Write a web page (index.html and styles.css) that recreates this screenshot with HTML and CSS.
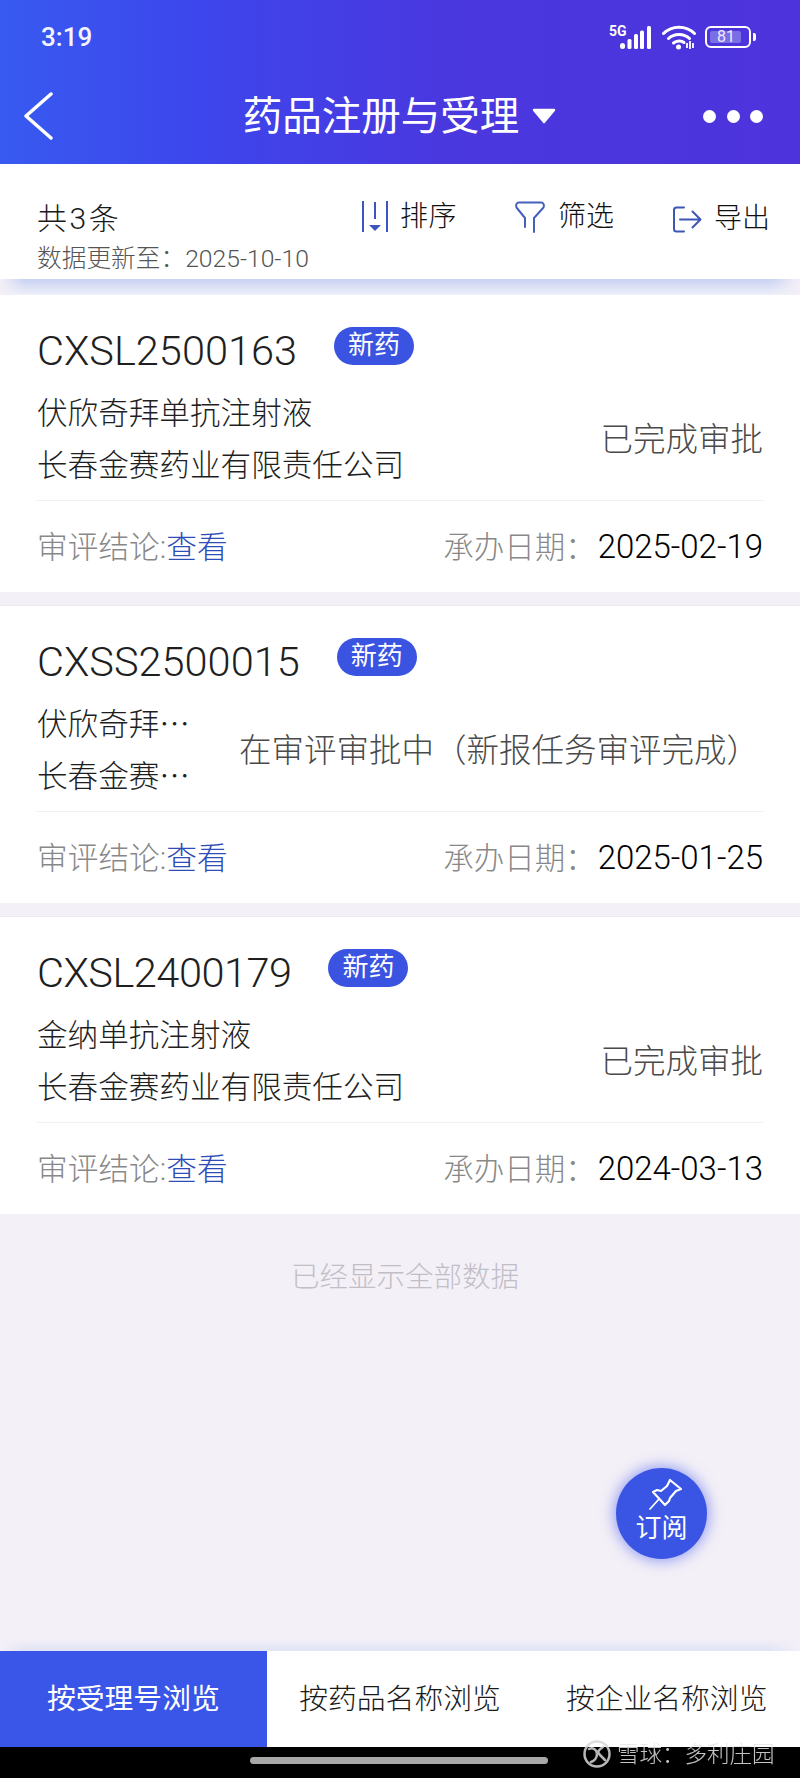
FILE: index.html
```html
<!DOCTYPE html>
<html lang="zh-CN">
<head>
<meta charset="utf-8">
<title>药品注册与受理</title>
<link rel="stylesheet" href="styles.css">
</head>
<body>
<div class="page">
  <header class="header">
    <div class="status">
      <span class="clock">3:19</span>
      <div class="status-icons">
        <svg class="sig" width="44" height="26" viewBox="0 0 44 26">
          <text class="sig-text" x="0" y="12">5G</text>
          <g fill="#fff">
            <rect x="11" y="19" width="5" height="6" rx="2.5"/>
            <rect x="18.500" y="15" width="4" height="10" rx="1.500"/>
            <rect x="25" y="10" width="4" height="15" rx="1.500"/>
            <rect x="31" y="6.500" width="4" height="18.500" rx="1.500"/>
            <rect x="38" y="2" width="4" height="23" rx="1.500"/>
          </g>
        </svg>
        <svg class="wifi" width="34" height="26" viewBox="0 0 34 26">
          <g fill="none" stroke="#fff" stroke-width="3" stroke-linecap="round">
            <path d="M1.500 9.500C10 1 24 1 32.500 9.500"/>
            <path d="M6.500 14.500C12 9 22 9 27.500 14.500"/>
            <path d="M11.500 19C14.500 16.500 19.500 16.500 22 18.500"/>
          </g>
          <circle cx="16.500" cy="23" r="2.500" fill="#fff"/>
          <path d="M25 19v5M28 17v8M31 19v5" stroke="#fff" stroke-width="1.800" fill="none"/>
        </svg>
        <div class="battery">
          <div class="battery-body"><span class="battery-fill"></span><span class="battery-num">81</span></div>
          <span class="battery-nub"></span>
        </div>
      </div>
    </div>
    <nav class="nav">
      <svg class="back" width="30" height="50" viewBox="0 0 30 50">
        <path d="M28 3 3 25 28 47" fill="none" stroke="#fff" stroke-width="3.500" stroke-linecap="round" stroke-linejoin="round"/>
      </svg>
      <div class="title-wrap">
        <h1 class="title">药品注册与受理</h1>
        <svg class="caret" width="26" height="16" viewBox="0 0 26 16"><path d="M3 2h20L13 14Z" fill="#fff" stroke="#fff" stroke-width="2.500" stroke-linejoin="round"/></svg>
      </div>
      <div class="dots"><i class="dot"></i><i class="dot"></i><i class="dot"></i></div>
    </nav>
  </header>

  <section class="toolbar">
    <div class="summary">
      <div class="count">共3条</div>
      <div class="updated">数据更新至：2025-10-10</div>
    </div>
    <div class="actions">
      <div class="action action-sort">
        <svg width="26" height="32" viewBox="0 0 26 32">
          <g stroke="#3d53c0" stroke-width="2" fill="none">
            <path d="M1 0v31M25 0v31M13 1v17"/>
          </g>
          <path d="M7 24h12l-6 6Z" fill="#3d53c0"/>
        </svg>
        <span>排序</span>
      </div>
      <div class="action action-filter">
        <svg width="30" height="32" viewBox="0 0 30 32">
          <path d="M10 26V17L1.500 6.500C.5 4 1.500 1.500 4 1.500h22c2.500 0 3.500 2.500 2.500 5L19 17v14" fill="none" stroke="#4460bd" stroke-width="2" stroke-linecap="round" stroke-linejoin="round"/>
        </svg>
        <span>筛选</span>
      </div>
      <div class="action action-export">
        <svg width="29" height="27" viewBox="0 0 29 27">
          <path d="M11 1.500H3.500C2 1.500 1 2.500 1 4v19c0 1.500 1 2.500 2.500 2.500H11" fill="none" stroke="#3d55b5" stroke-width="2" stroke-linecap="round"/>
          <path d="M7 13.500h20M19.500 5.500l8 8-8 8" fill="none" stroke="#3d55b5" stroke-width="2" stroke-linecap="round" stroke-linejoin="round"/>
        </svg>
        <span>导出</span>
      </div>
    </div>
  </section>
  <div class="band band-top"></div>

  <main class="list">
    <article class="card">
      <div class="card-head"><span class="code">CXSL2500163</span><span class="badge">新药</span></div>
      <div class="card-body">
        <div class="names"><div class="line">伏欣奇拜单抗注射液</div><div class="line">长春金赛药业有限责任公司</div></div>
        <div class="state">已完成审批</div>
      </div>
      <div class="card-foot">
        <div class="review">审评结论:<a class="link">查看</a></div>
        <div class="date-wrap"><span class="date-label">承办日期：</span><span class="date">2025-02-19</span></div>
      </div>
    </article>
    <article class="card">
      <div class="card-head"><span class="code">CXSS2500015</span><span class="badge">新药</span></div>
      <div class="card-body">
        <div class="names"><div class="line">伏欣奇拜…</div><div class="line">长春金赛…</div></div>
        <div class="state state-long">在审评审批中（新报任务审评完成）</div>
      </div>
      <div class="card-foot">
        <div class="review">审评结论:<a class="link">查看</a></div>
        <div class="date-wrap"><span class="date-label">承办日期：</span><span class="date">2025-01-25</span></div>
      </div>
    </article>
    <article class="card">
      <div class="card-head"><span class="code code-tight">CXSL2400179</span><span class="badge">新药</span></div>
      <div class="card-body">
        <div class="names"><div class="line">金纳单抗注射液</div><div class="line">长春金赛药业有限责任公司</div></div>
        <div class="state">已完成审批</div>
      </div>
      <div class="card-foot">
        <div class="review">审评结论:<a class="link">查看</a></div>
        <div class="date-wrap"><span class="date-label">承办日期：</span><span class="date">2024-03-13</span></div>
      </div>
    </article>
    <p class="end-note">已经显示全部数据</p>
    <div class="fab">
      <svg width="36" height="34" viewBox="0 0 36 34">
        <path d="M22 2 33 11 28 13 22 20 21 23 17 27 5 14 9 12 13 13 19 8Z" fill="none" stroke="#fff" stroke-width="2.200" stroke-linejoin="round"/>
        <path d="M11 21 2 31" stroke="#fff" stroke-width="1.800" stroke-linecap="round"/>
      </svg>
      <span class="fab-text">订阅</span>
    </div>
  </main>

  <div class="band band-bottom"></div>
  <div class="tabs">
    <div class="tab tab-active">按受理号浏览</div>
    <div class="tab">按药品名称浏览</div>
    <div class="tab">按企业名称浏览</div>
  </div>
  <footer class="gesture">
    <span class="home-bar"></span>
    <div class="watermark">
      <svg width="30" height="28" viewBox="0 0 30 28">
        <circle cx="15" cy="14" r="12.500" fill="none" stroke="#d8d8d8" stroke-width="2.500"/>
        <path d="M7 9c4-2 8 1 8 5s-3 7-6 8M21 7c-5 3-6 5-3 8l5 5" fill="none" stroke="#d8d8d8" stroke-width="2.500" stroke-linecap="round"/>
      </svg>
      <span class="wm-text">雪球：多利庄园</span>
    </div>
  </footer>
</div>
</body>
</html>
```
FILE: styles.css
```css
* { box-sizing: border-box; }
html, body { margin: 0; padding: 0; }
body {
  font-family: Roboto, "Noto Sans CJK SC", sans-serif;
  color: #222;
  background: #f4f0f7;
}
.page {
  width: 800px;
  height: 1778px;
  display: flex;
  flex-direction: column;
  overflow: hidden;
}

/* header */
.header {
  height: 164px;
  flex: none;
  background: linear-gradient(90deg, #385af0 0%, #3d46ec 25%, #4a38df 55%, #4d33dc 100%);
  color: #fff;
}
.status {
  height: 68px;
  padding: 22px 44px 0 41px;
  display: flex;
  justify-content: space-between;
  align-items: flex-start;
}
.clock { font-size: 26px; line-height: 30px; font-weight: 500; color: #f4f4ff; }
.status-icons { display: flex; align-items: center; gap: 9px; margin-top: 2px; }
.sig-text { font: 700 14px Roboto, sans-serif; fill: #fff; }
.battery { display: flex; align-items: center; gap: 2px; }
.battery-body {
  width: 46px;
  height: 22px;
  border: 2px solid #fff;
  border-radius: 6px;
  position: relative;
  padding: 3px;
  display: flex;
}
.battery-fill { width: 31px; background: #7a6fe6; border-radius: 2px; }
.battery-num {
  position: absolute;
  left: 0;
  right: 4px;
  top: 0;
  text-align: center;
  font-size: 16px;
  line-height: 18px;
  color: #eeeaff;
}
.battery-nub { width: 3px; height: 8px; background: #fff; border-radius: 0 2px 2px 0; }

.nav {
  height: 96px;
  padding: 0 37px 0 23px;
  display: flex;
  align-items: center;
  justify-content: space-between;
}
.back { flex: none; }
.title-wrap { display: flex; align-items: center; gap: 12px; margin-left: 44px; }
.title {
  margin: 2px 0 0;
  font-size: 39.500px;
  line-height: 50px;
  font-weight: 400;
  color: #fff;
}
.dots { display: flex; gap: 10.500px; }
.dot { width: 13px; height: 13px; border-radius: 50%; background: #fff; display: block; }

/* toolbar */
.toolbar {
  height: 115px;
  flex: none;
  background: #fff;
  padding: 0 30px 0 37px;
  display: flex;
  justify-content: space-between;
}
.count { margin-top: 37px; font-size: 30px; line-height: 36px; letter-spacing: 2.500px; color: #1a1a1a; font-weight: 300; }
.updated { margin-top: 6px; font-size: 24.700px; line-height: 32px; color: #555; font-weight: 300; }
.actions { display: flex; align-items: flex-start; }
.action {
  display: flex;
  align-items: center;
  font-size: 28px;
  line-height: 36px;
  font-weight: 300;
  color: #111;
}
.action-sort { margin-top: 35px; gap: 12px; letter-spacing: .5px; }
.action-filter { margin-top: 35px; margin-left: 58px; gap: 13px; }
.action-export { margin-top: 37px; margin-left: 59px; gap: 12px; }

.band { flex: none; }
.band-top {
  height: 16px;
  background: linear-gradient(#c9d2f2, #eef0f9);
  -webkit-mask-image: linear-gradient(90deg, transparent 0, #000 24px, #000 770px, transparent 800px);
  mask-image: linear-gradient(90deg, transparent 0, #000 24px, #000 770px, transparent 800px);
}
.band-bottom {
  height: 12px;
  margin-top: -12px;
  background: linear-gradient(rgba(222, 226, 245, 0), #dfe3f5);
  -webkit-mask-image: linear-gradient(90deg, transparent 0, #000 24px, #000 770px, transparent 800px);
  mask-image: linear-gradient(90deg, transparent 0, #000 24px, #000 770px, transparent 800px);
}

/* list */
.list {
  flex: 1;
  min-height: 0;
  position: relative;
}
.card {
  background: #fff;
  padding: 0 37px;
}
.card + .card { margin-top: 13px; border-top: 1px solid #ebe8ee; }
.card-head {
  height: 80px;
  padding-top: 32px;
  display: flex;
  align-items: flex-start;
}
.code {
  font-size: 41.500px;
  line-height: 48px;
  font-weight: 300;
  color: #1f1f1f;
}
.code-tight { letter-spacing: -.5px; }
.badge {
  width: 80px;
  height: 38px;
  margin-left: 37px;
  margin-top: 0;
  border-radius: 19px;
  background: #3a53e0;
  color: #fff;
  font-size: 26px;
  line-height: 36px;
  text-align: center;
}
.card-body {
  margin-top: 13px;
  display: flex;
  align-items: center;
  gap: 30px;
}
.names { flex: 1; min-width: 0; margin-top: -3px; margin-bottom: 3px; }
.line {
  font-family: "Noto Sans CJK SC", sans-serif;
  font-size: 30.600px;
  line-height: 52px;
  font-weight: 300;
  color: #1f1f1f;
  white-space: nowrap;
}
.state {
  flex: none;
  font-size: 32.500px;
  line-height: 44px;
  font-weight: 300;
  color: #4a4a4a;
}
.state-long { margin-right: 4px; }
.card-foot {
  margin-top: 8px;
  height: 92px;
  padding-bottom: 4px;
  border-top: 1px solid #f1f1f1;
  display: flex;
  align-items: center;
  justify-content: space-between;
  font-size: 30.700px;
  font-weight: 300;
  color: #888;
}
.link { color: #2f4db8; }
.date-label { font-size: 30.500px; }
.date { font-size: 33px; color: #000; font-weight: 300; margin-left: 2px; }

.end-note {
  margin: 44px 0 0;
  padding-left: 10px;
  text-align: center;
  font-size: 28.500px;
  line-height: 40px;
  font-weight: 300;
  color: #c2bec6;
}
.fab {
  position: absolute;
  left: 616px;
  top: 1173px;
  width: 91px;
  height: 91px;
  border-radius: 50%;
  background: #3a55e4;
  box-shadow: 0 0 14px 2px rgba(70, 90, 240, .55);
  display: flex;
  flex-direction: column;
  align-items: center;
  padding-top: 10px;
}
.fab svg { margin-left: 8px; }
.fab-text { font-size: 26px; line-height: 32px; color: #fff; }

/* tabs */
.tabs {
  height: 96px;
  flex: none;
  display: flex;
  background: #fff;
  position: relative;
}
.tab {
  flex: 1;
  display: flex;
  align-items: center;
  justify-content: center;
  padding-bottom: 6px;
  font-size: 28.800px;
  font-weight: 300;
  color: #1a1a1a;
}
.tab-active { background: #3a56e8; color: #fff; font-weight: 400; }

.gesture {
  height: 31px;
  flex: none;
  background: #000;
  position: relative;
  display: flex;
  justify-content: center;
  padding-top: 10px;
  padding-right: 3px;
}
.home-bar { width: 298px; height: 7px; border-radius: 4px; background: #a8a8a8; }
.watermark {
  position: absolute;
  left: 582px;
  top: -7px;
  display: flex;
  align-items: center;
  gap: 5px;
  opacity: .85;
}
.wm-text { font-size: 22.500px; line-height: 28px; font-weight: 300; color: #e6e6e6; }
```
